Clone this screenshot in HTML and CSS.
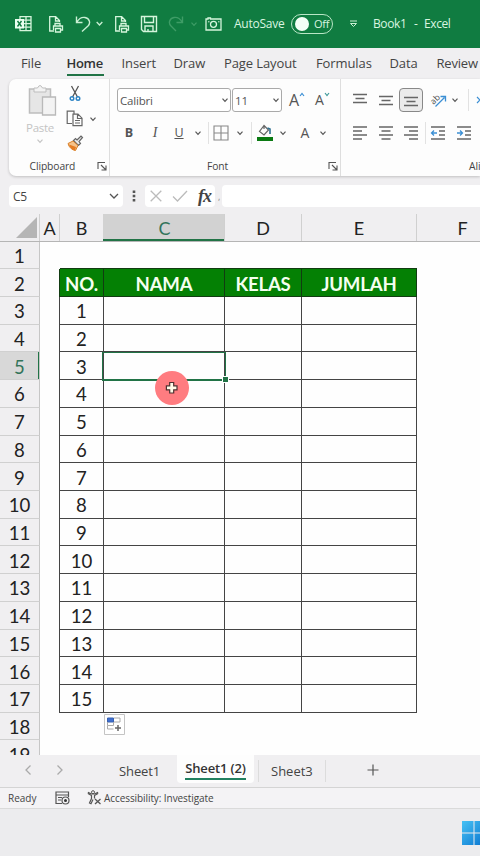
FILE: index.html
```html
<!DOCTYPE html>
<html lang="en">
<head>
<meta charset="utf-8">
<title>Book1 - Excel</title>
<link rel="stylesheet" href="styles.css">
</head>
<body>
<svg class="defs" width="0" height="0">
  <symbol id="chev" viewBox="0 0 8 8"><path d="M1.5 2.7 4 5.3l2.500-2.600" fill="none" stroke="currentColor" stroke-width="1.200"/></symbol>
  <symbol id="launch" viewBox="0 0 10 10"><path d="M1 8V1.500h7M4 4l4.500 4.500M9 4.500V9H4.500" fill="none" stroke="#555" stroke-width="1.100"/></symbol>
  <symbol id="docprint" viewBox="0 0 16 18"><g fill="none" stroke="#d5f5dc" stroke-width="1.300"><path d="M6 16H1.700V1.700h6L11.500 5.500V7M7.500 2v4h4M7 11V8.500h5V11M5.500 15v-4h9v4h-2M7.500 13.500h5V17h-5z"/></g></symbol>
</svg>
<header class="titlebar">
  <svg class="m-excel" width="18" height="18" viewBox="0 0 18 18"><path d="M5 1.700h11v14H5zM5 5.200h11M5 8.700h11M5 12.200h11M11 1.700v14" fill="none" stroke="#d5f5dc" stroke-width="1.300"/><rect x="0" y="4" width="9" height="9.500" fill="#eafff0"/><path d="m2.500 6 4 5.500m0-5.500-4 5.500" stroke="#107c41" stroke-width="1.400"/></svg>
  <svg class="m-print" width="16" height="18"><use href="#docprint"/></svg>
  <svg class="m-undo" width="16" height="18" viewBox="0 0 16 18"><path d="M1.500 1.500v6h6M1.800 7.200C4 3.500 7 2 10 2.500c4.500.8 6 5.500 3 8.500l-6 5.500" fill="none" stroke="#c9efd3" stroke-width="1.400"/></svg>
  <svg class="m-uchev tint" width="9" height="9"><use href="#chev"/></svg>
  <svg class="m-print2" width="16" height="18"><use href="#docprint"/></svg>
  <svg class="m-save" width="18" height="18" viewBox="0 0 18 18"><path d="M1.500 1.500h15v15h-13l-2-2zM4.500 1.500v6h9v-6M5 16.500v-5.500h8v5.500M8 14v2.500" fill="none" stroke="#d5f5dc" stroke-width="1.400"/></svg>
  <svg class="m-redo" width="16" height="18" viewBox="0 0 16 18"><path d="M14.500 1.500v6h-6M14.200 7.200C12 3.500 9 2 6 2.500 1.500 3.300 0 8 3 11l5 5" fill="none" stroke="#3e9c66" stroke-width="1.400"/></svg>
  <svg class="m-rchev faint" width="8" height="8"><use href="#chev"/></svg>
  <svg class="m-cam" width="17" height="14" viewBox="0 0 17 14"><path d="M1 2h2V1h2.500v1H16v11H1z" fill="none" stroke="#d5f5dc" stroke-width="1.300"/><circle cx="8.500" cy="7.300" r="3" fill="none" stroke="#d5f5dc" stroke-width="1.300"/><path d="M3 4.800h1.500M13 4.800h1.500" stroke="#d5f5dc"/></svg>
  <span class="autosave">AutoSave</span>
  <span class="toggle"><i></i>Off</span>
  <svg class="m-qat" width="9" height="8" viewBox="0 0 9 8"><path d="M1 1h7M1.500 3.500h6l-3 3z" fill="none" stroke="#c9efd3"/></svg>
  <span class="book">Book1</span><span class="dash">-</span><span class="app">Excel</span>
</header>
<nav class="menu">
  <span class="t-file">File</span><span class="t-home">Home</span><span class="t-insert">Insert</span><span class="t-draw">Draw</span><span class="t-page">Page Layout</span><span class="t-form">Formulas</span><span class="t-data">Data</span><span class="t-rev">Review</span>
</nav>
<section class="ribbon">
  <div class="group clip">
    <div class="cliptop">
      <div class="paste">
        <svg width="30" height="33" viewBox="0 0 30 33"><path d="M1.500 5h21v24h-21z" fill="#e6e6e6" stroke="#bdbdbd" stroke-width="1.500"/><path d="M6 8V4h3.500q2.500-5 5 0H18v4z" fill="#f3f3f3" stroke="#bdbdbd"/><path d="M14.500 13h13v18h-13z" fill="#f3f3f3" stroke="#b9b9b9" stroke-width="1.300"/></svg>
        <span>Paste</span>
        <svg class="pale" width="8" height="8"><use href="#chev"/></svg>
      </div>
      <div class="cliptools">
        <svg width="12" height="17" viewBox="0 0 12 17"><path d="m2.500 1 6 11M9.500 1l-6 11" stroke="#555" stroke-width="1.300"/><circle cx="3" cy="13.500" r="1.800" fill="none" stroke="#2b83c4" stroke-width="1.400"/><circle cx="9" cy="13.500" r="1.800" fill="none" stroke="#2b83c4" stroke-width="1.400"/></svg>
        <div class="copyrow"><svg width="18" height="17" viewBox="0 0 18 17"><path d="M6 13.500H1.200V1.200H8V4M7 4.200h5l4 4v7.500H7zM11.500 4.500v4h4M9 10.500h5M9 13h5" fill="none" stroke="#666" stroke-width="1.200"/></svg><svg class="c" width="8" height="8"><use href="#chev"/></svg></div>
        <svg width="17" height="17" viewBox="0 0 17 17"><path d="m10 5 4-4 1.500 1.500-3.500 4 1.500 2-2 2-5-5 2-2z" fill="#eee" stroke="#666" stroke-width="1.200"/><path d="m6 6-5 2.500c1 4 4 6.500 7.500 7l2.500-5z" fill="#f6c38a" stroke="#d9822b"/><path d="m2 9.500 7 2.500-1 3.500C5 15 3 12.500 2 9.500" fill="#e57c22"/></svg>
      </div>
    </div>
    <div class="label"><span class="l-clip">Clipboard</span><svg width="10" height="10"><use href="#launch"/></svg></div>
  </div>
  <div class="group font">
    <div class="row1">
      <div class="combo name">Calibri<svg width="8" height="8"><use href="#chev"/></svg></div>
      <div class="combo size">11<svg width="8" height="8"><use href="#chev"/></svg></div>
      <span class="grow">A<svg width="6" height="5" viewBox="0 0 6 5"><path d="m1 4 2-2.500L5 4" fill="none" stroke="#3b8fd4" stroke-width="1.200"/></svg></span>
      <span class="grow shrink">A<svg width="6" height="5" viewBox="0 0 6 5"><path d="m1 1 2 2.500L5 1" fill="none" stroke="#3f9a9a" stroke-width="1.200"/></svg></span>
    </div>
    <div class="row2">
      <b class="i16 g3">B</b><em class="i16 g10">I</em><u class="i16 g8">U</u><svg class="g7" width="8" height="8"><use href="#chev"/></svg>
      <i class="sep g6"></i>
      <svg class="g4" width="16" height="16" viewBox="0 0 16 16"><path d="M1 1h14v14H1zM8 1v14M1 8h14" fill="none" stroke="#888" stroke-width="1.100"/></svg><svg class="g7" width="8" height="8"><use href="#chev"/></svg>
      <i class="sep g7"></i>
      <svg class="g4" width="18" height="17" viewBox="0 0 18 17"><path d="m8 1.500-4.500 6L8 11l4.500-5zM8 5V1" fill="none" stroke="#666" stroke-width="1.200"/><path d="m11.500 4 2.500 1v5" fill="none" stroke="#2f7192" stroke-width="1.600"/><path d="M1 13h16v4H1z" fill="#0a7a12"/></svg><svg class="g5" width="8" height="8"><use href="#chev"/></svg>
      <span class="i16 g10 fa">A</span><svg class="g6" width="8" height="8"><use href="#chev"/></svg>
    </div>
    <div class="label"><span class="l-font">Font</span><svg width="10" height="10"><use href="#launch"/></svg></div>
  </div>
  <div class="group align">
    <div class="row1">
      <svg class="g11" width="16" height="16" viewBox="0 0 16 16"><path d="M1 2.500h14M3.500 6.500h9M1 10.500h14" stroke="#666" stroke-width="1.300"/></svg>
      <svg class="g10" width="16" height="16" viewBox="0 0 16 16"><path d="M1 4.500h14M3.500 8.500h9M1 12.500h14" stroke="#666" stroke-width="1.300"/></svg>
      <span class="on g5"><svg width="16" height="16" viewBox="0 0 16 16"><path d="M1 5.500h14M3.500 9.500h9M1 13.500h14" stroke="#666" stroke-width="1.300"/></svg></span>
      <svg class="g6" width="18" height="16" viewBox="0 0 18 16"><text x="1.500" y="10.500" transform="rotate(-45 6 8)" font-family="Open Sans, sans-serif" font-size="8.500" fill="#444">ab</text><path d="m6.500 14.500 9-9M11.500 4.500h5v5" fill="none" stroke="#3b8fd4" stroke-width="1.300"/></svg>
      <svg class="g4" width="8" height="8"><use href="#chev"/></svg>
      <i class="sep g9"></i>
      <svg class="g7" width="10" height="10" viewBox="0 0 10 10"><path d="m1 2 3 3-3 3M9 2 6 5l3 3" fill="none" stroke="#3b8fd4" stroke-width="1.200"/></svg>
    </div>
    <div class="row2">
      <svg class="g11" width="16" height="16" viewBox="0 0 16 16"><path d="M1 2h14M1 6h9M1 10h14M1 14h9" stroke="#666" stroke-width="1.300"/></svg>
      <svg class="g10" width="16" height="16" viewBox="0 0 16 16"><path d="M1 2h14M3.500 6h9M1 10h14M3.500 14h9" stroke="#666" stroke-width="1.300"/></svg>
      <svg class="g9" width="16" height="16" viewBox="0 0 16 16"><path d="M1 2h14M6 6h9M1 10h14M6 14h9" stroke="#666" stroke-width="1.300"/></svg>
      <i class="sep g6"></i>
      <svg class="g4" width="16" height="16" viewBox="0 0 16 16"><path d="M1 2h14M9 6h6M9 10h6M1 14h14" stroke="#666" stroke-width="1.300"/><path d="M7 8H1.500M4 5.500 1.500 8 4 10.500" fill="none" stroke="#3b8fd4" stroke-width="1.300"/></svg>
      <svg class="g10" width="16" height="16" viewBox="0 0 16 16"><path d="M1 2h14M9 6h6M9 10h6M1 14h14" stroke="#666" stroke-width="1.300"/><path d="M1 8h5.500M4 5.500 6.500 8 4 10.500" fill="none" stroke="#3b8fd4" stroke-width="1.300"/></svg>
    </div>
    <div class="label"><span class="l-align">Alignment</span></div>
  </div>
</section>
<section class="formula">
  <div class="namebox">C5<svg width="10" height="8" viewBox="0 0 10 8"><path d="m1 2 4 4 4-4" fill="none" stroke="#555" stroke-width="1.300"/></svg></div>
  <svg class="dots" width="4" height="14" viewBox="0 0 4 14"><path d="M.7 1.500h2.600v2.400H.7zM.7 5.800h2.600v2.400H.7zM.7 10.100h2.600v2.400H.7z" fill="#555"/></svg>
  <div class="fxbox">
    <svg width="12" height="12" viewBox="0 0 12 12"><path d="m.7.7 10.600 10.600M11.300.7.700 11.300" stroke="#bbb" stroke-width="1.300"/></svg>
    <svg width="16" height="12" viewBox="0 0 16 12"><path d="m1 6.500 4.500 4.500L15 1" fill="none" stroke="#bbb" stroke-width="1.300"/></svg>
    <span>fx</span>
  </div>
  <span class="tick">,</span>
  <div class="finput"></div>
</section>
<main class="sheet">
  <div class="cols">
    <span class="corner"><svg width="21" height="21"><path d="M21 0v21H0z" fill="#b5b5b5"/></svg></span><span>A</span><span>B</span><span class="act">C</span><span>D</span><span>E</span><span>F</span>
  </div>
  <div class="row"><b>1</b></div>
  <div class="row head"><b>2</b><i></i><i>NO.</i><i>NAMA</i><i>KELAS</i><i>JUMLAH</i></div>
  <div class="row data"><b>3</b><i></i><i>1</i><i></i><i></i><i></i></div>
  <div class="row data"><b>4</b><i></i><i>2</i><i></i><i></i><i></i></div>
  <div class="row data"><b class="act">5</b><i></i><i>3</i><i></i><i></i><i></i></div>
  <div class="row data"><b>6</b><i></i><i>4</i><i></i><i></i><i></i></div>
  <div class="row data"><b>7</b><i></i><i>5</i><i></i><i></i><i></i></div>
  <div class="row data"><b>8</b><i></i><i>6</i><i></i><i></i><i></i></div>
  <div class="row data"><b>9</b><i></i><i>7</i><i></i><i></i><i></i></div>
  <div class="row data"><b>10</b><i></i><i>8</i><i></i><i></i><i></i></div>
  <div class="row data"><b>11</b><i></i><i>9</i><i></i><i></i><i></i></div>
  <div class="row data"><b>12</b><i></i><i>10</i><i></i><i></i><i></i></div>
  <div class="row data"><b>13</b><i></i><i>11</i><i></i><i></i><i></i></div>
  <div class="row data"><b>14</b><i></i><i>12</i><i></i><i></i><i></i></div>
  <div class="row data"><b>15</b><i></i><i>13</i><i></i><i></i><i></i></div>
  <div class="row data"><b>16</b><i></i><i>14</i><i></i><i></i><i></i></div>
  <div class="row data"><b>17</b><i></i><i>15</i><i></i><i></i><i></i></div>
  <div class="row"><b>18</b></div>
  <div class="row"><b>19</b></div>
  <div class="selection"></div>
  <svg class="pointer" width="36" height="36" viewBox="0 0 36 36"><circle cx="18" cy="18" r="17" fill="#ff7c80"/><path d="M15.700 12.500h4v3.300H23v4h-3.300V23h-4v-3.200h-3.300v-4h3.300z" fill="#fffbe8" stroke="#4d3030" stroke-width="1.200"/></svg>
  <svg class="fill" width="21" height="21" viewBox="0 0 21 21"><path d="M.5.500h20v20H.5z" fill="#fff" stroke="#c4c4c4"/><path d="M3.500 4h6v4h-6z" fill="#3f6fd0" stroke="#3760b0"/><path d="M10 4h6v4h-6M3.500 8v3.500h6V8M3.500 11.500V15h6" fill="none" stroke="#aaa"/><path d="M14 11v6M11 14h6" stroke="#666" stroke-width="1.500"/></svg>
</main>
<section class="tabs">
  <svg class="prev" width="8" height="12" viewBox="0 0 8 12"><path d="M6.500 1.500 2 6l4.500 4.500" fill="none" stroke="#aaa" stroke-width="1.300"/></svg>
  <svg class="next" width="8" height="12" viewBox="0 0 8 12"><path d="M1.500 1.500 6 6l-4.500 4.500" fill="none" stroke="#aaa" stroke-width="1.300"/></svg>
  <span class="s1">Sheet1</span>
  <span class="s2"><b>Sheet1 (2)</b></span>
  <span class="s3">Sheet3</span>
  <svg class="plus" width="12" height="12" viewBox="0 0 12 12"><path d="M6 .5v11M.5 6h11" stroke="#555" stroke-width="1.200"/></svg>
</section>
<section class="status">
  <span class="ready">Ready</span>
  <svg class="macro" width="15" height="14" viewBox="0 0 15 14"><path d="M7 12.500H1V1h12.500v5M1 4h12.500M3 6.500h4M3 9h3" fill="none" stroke="#555" stroke-width="1.200"/><circle cx="10.500" cy="9.500" r="3.500" fill="none" stroke="#555" stroke-width="1.200"/><circle cx="10.500" cy="9.500" r="1.500" fill="#333"/></svg>
  <svg class="acc" width="15" height="15" viewBox="0 0 15 15"><circle cx="6" cy="2.200" r="1.500" fill="none" stroke="#555"/><path d="M1 3.500 4.500 5.500v3L2.500 13l1.500.7L6 9.500M11 3.500 7.500 5.500v3M1 3.500l.5-1 3 1.500h3l3-1.500.5 1" fill="none" stroke="#555" stroke-width="1.200"/><path d="m8 9 5.500 5M13.500 9 8 14" stroke="#555" stroke-width="1.300"/></svg>
  <span class="acctext">Accessibility: Investigate</span>
</section>
<footer class="taskbar">
  <svg width="24" height="24" viewBox="0 0 24 24"><defs><linearGradient id="w" x2="1" y2="1"><stop offset="0" stop-color="#47c2f4"/><stop offset="1" stop-color="#0873cf"/></linearGradient></defs><path d="M0 0h11.500v11.500H0zM12.500 0H24v11.500H12.500zM0 12.500h11.500V24H0zM12.500 12.500H24V24H12.500z" fill="url(#w)"/></svg>
</footer>
</body>
</html>
```
FILE: styles.css
```css
* { box-sizing: border-box; }
html { overflow: hidden; }
body { margin: 0; width: 480px; height: 856px; overflow: hidden; background: #f0eff1; font-family: "Open Sans", "Noto Sans", sans-serif; color: #444; display: flex; flex-direction: column; }
svg { flex: none; display: block; }
span { white-space: nowrap; }
.defs { position: absolute; }

.titlebar { height: 47.5px; flex: none; background: #107c41; display: flex; align-items: center; color: #d9f5e0; font-size: 12px; }
.titlebar span { flex: none; }
.m-excel { margin-left: 15px; }
.m-print { margin-left: 15px; }
.m-undo { margin-left: 11px; }
.m-uchev { margin-left: 4px; }
.m-print2 { margin-left: 10px; }
.m-save { margin-left: 10px; }
.m-redo { margin-left: 10px; }
.m-rchev { margin-left: 6px; }
.m-cam { margin-left: 7px; }
.tint { color: #c9efd3; }
.faint { color: #3e9c66; }
.autosave { margin-left: 12px; width: 57px; letter-spacing: -.25px; }
.toggle { width: 42px; height: 20px; border: 1.300px solid #b9e6c6; border-radius: 10px; display: flex; align-items: center; font-size: 11px; gap: 5px; padding-left: 3px; letter-spacing: -.3px; }
.toggle i { width: 14px; height: 14px; border-radius: 50%; background: #f4fff6; }
.m-qat { margin-left: 16px; }
.book { margin-left: 15px; width: 41px; letter-spacing: -.4px; }
.dash { width: 10px; }
.app { letter-spacing: -.4px; }

.menu { height: 31.5px; flex: none; display: flex; padding-left: 21px; font-size: 13px; line-height: 31px; letter-spacing: -.1px; }
.menu span { flex: none; height: 28px; }
.t-file { width: 45.500px; }
.t-home { width: 37px; margin-right: 18px; font-weight: 600; color: #333; border-bottom: 2px solid #217346; letter-spacing: -.3px; }
.t-insert { width: 52px; }
.t-draw { width: 50.500px; }
.t-page { width: 92px; }
.t-form { width: 73.500px; }
.t-data { width: 47px; }
.menu .t-rev { letter-spacing: -.2px; }

.ribbon { margin-left: 9px; height: 97px; flex: none; display: flex; background: #fdfdfd; border-radius: 7px 0 0 7px; box-shadow: 0 1px 3px #0003; color: #555; }
.group { flex: none; display: flex; flex-direction: column; }
.group + .group { border-left: 1px solid #dedede; }
.clip { width: 100px; }
.font { width: 231px; }
.align { width: 140px; overflow: hidden; }
.cliptop { height: 77px; display: flex; }
.paste { width: 56px; margin-left: 3px; display: flex; flex-direction: column; align-items: center; padding-top: 5px; font-size: 11.500px; line-height: 17px; color: #c4c4c4; gap: 2px; letter-spacing: -.3px; }
.paste span { margin-bottom: -1px; }
.pale { color: #c4c4c4; }
.paste svg:first-child { margin-left: 6px; }
.cliptools { margin-left: -1px; padding-top: 6px; display: flex; flex-direction: column; gap: 8px; }
.cliptools > svg:first-child { margin-left: 2px; }
.copyrow { display: flex; align-items: center; margin-left: -1px; }
.c { margin-left: 5px; }
.row1 { height: 42px; display: flex; align-items: center; }
.row2 { height: 23px; display: flex; align-items: center; }
.font .row1, .font .row2 { padding-left: 7px; }
.font .row2 { padding-left: 8px; }
.combo { height: 24px; border: 1px solid #aaa; border-radius: 3px; display: flex; align-items: center; justify-content: space-between; padding: 0 1px 0 2px; font-size: 11.500px; flex: none; background: #fff; letter-spacing: -.2px; }
.name { width: 114px; }
.size { width: 50px; margin-left: 1px; }
.grow { display: flex; font-size: 16px; line-height: 20px; margin-left: 7px; width: 26px; flex: none; }
.grow svg { margin-top: 2px; }
.grow.shrink { font-size: 14px; width: 18px; margin-left: 0; }
.i16 { width: 16px; text-align: center; font-size: 12.500px; line-height: 18px; }
em.i16 { font-family: "Liberation Serif", serif; font-size: 14px; }
.fa { font-size: 14px; }
.sep { width: 1px; height: 22px; background: #e2e2e2; flex: none; }
.g3 { margin-left: 3px; } .g4 { margin-left: 4px; } .g5 { margin-left: 5px; } .g6 { margin-left: 6px; } .g7 { margin-left: 7px; } .g8 { margin-left: 8px; } .g9 { margin-left: 9px; } .g10 { margin-left: 10px; } .g11 { margin-left: 11px; }
.on { flex: none; width: 24px; height: 24px; border: 1px solid #888; border-radius: 4px; background: #ebebeb; display: flex; align-items: center; justify-content: center; }
.label { display: flex; align-items: center; font-size: 10.300px; height: 20px; color: #444; letter-spacing: -.1px; }
.row2 + .label { margin-top: 12px; }
.l-clip { margin-left: 20.500px; width: 67px; }
.l-font { margin-left: 97px; width: 121px; }
.l-align { margin-left: 128px; }

.formula { margin: 9px 0 0 9px; height: 22px; flex: none; display: flex; align-items: center; }
.namebox { width: 114px; height: 22px; background: #fff; border-radius: 4px; display: flex; align-items: center; justify-content: space-between; padding: 0 4px; font-size: 12px; flex: none; letter-spacing: -.3px; }
.dots { margin-left: 9px; }
.fxbox { margin-left: 9px; width: 70px; height: 22px; background: #fff; border-radius: 4px; display: flex; align-items: center; padding-left: 5px; flex: none; }
.fxbox svg + svg { margin-left: 10px; }
.fxbox span { margin-left: 10px; font: italic bold 18px/20px "Liberation Serif", serif; letter-spacing: -1px; }
.tick { width: 7px; padding-left: 3px; font-size: 9px; flex: none; color: #888; }
.finput { flex: 1; height: 22px; background: #fff; border-radius: 4px 0 0 4px; }

.sheet { margin-top: 6.500px; height: 541.500px; flex: none; overflow: hidden; background: #fefefe; position: relative; font-family: Lato, sans-serif; font-size: 18.600px; color: #222; }
.cols, .row { display: grid; grid-template-columns: 40px 20px 44px 121px 77px 115px 92px; }
.cols { height: 28px; background: #f0eff1; border-bottom: 1px solid #b5b5b5; font-size: 18px; }
.cols span { display: flex; justify-content: center; align-items: center; border-right: 1px solid #d0d0d0; padding-top: 2px; }
.cols span.corner { justify-content: flex-end; padding: 1px 2px 0 0; }
.cols span.act { background: #d2d2d2; color: #33745a; box-shadow: inset 0 -2px #217346; margin-left: -1px; padding-left: 2px; }
.row { height: 27.720px; }
.row b, .row i { font-weight: 400; font-style: normal; display: flex; align-items: center; justify-content: center; padding-top: 2px; }
.row b { background: #f0eff1; border-bottom: 1px solid #d0d0d0; border-right: 1px solid #c6c6c6; }
.row b.act { background: #d8d8d8; color: #33745a; box-shadow: inset -1px 0 #217346; }
.row i { border-right: 1px solid #444; border-bottom: 1px solid #444; }
.row i:nth-child(2) { border-bottom: 0; }
.row.head i { background: #048004; color: #f4fff0; font-weight: 700; border-color: #123c12; box-shadow: 0 -1px #123c12; letter-spacing: -.2px; }
.row.head i:nth-child(2) { background: none; box-shadow: none; }
.selection { position: absolute; left: 102px; top: 138px; width: 124px; height: 29px; border: 1.500px solid #217346; border-bottom-width: 2px; }
.selection::after { content: ""; position: absolute; right: -3px; bottom: -3px; width: 5px; height: 5px; background: #217346; outline: 1px solid #fff; }
.pointer { position: absolute; left: 153.500px; top: 156px; }
.fill { position: absolute; left: 104px; top: 500px; }

.tabs { height: 33px; flex: none; display: flex; align-items: center; border-bottom: 1px solid #d4d4d4; font-size: 13px; }
.prev { margin: 0 0 2px 24px; }
.next { margin: 0 0 2px 24px; }
.s1 { margin-left: 55px; width: 58px; letter-spacing: -.1px; }
.s2 { width: 77px; height: 28px; align-self: flex-start; background: #fdfdfd; border-radius: 0 0 4px 4px; text-align: center; }
.s2 b { display: inline-block; height: 25px; line-height: 27px; font-weight: 600; font-size: 13px; letter-spacing: -.15px; border-bottom: 2px solid #218060; color: #333; }
.s3 { margin-left: 4px; height: 22px; width: 68px; border: solid #dcdcdc; border-width: 0 1px; padding-left: 12px; line-height: 22px; letter-spacing: 0; }
.plus { margin: 0 0 2px 41px; }
.status { height: 20.500px; flex: none; display: flex; align-items: center; background: #f4f3f5; border-bottom: 1px solid #dadada; font-size: 10px; }
.ready { margin-left: 8px; width: 47px; }
.acc { margin-left: 17px; }
.acctext { margin-left: 2px; letter-spacing: -.08px; }
.taskbar { flex: 1; background: #ececee; padding: 12.500px 0 0 462px; overflow: hidden; }
```
